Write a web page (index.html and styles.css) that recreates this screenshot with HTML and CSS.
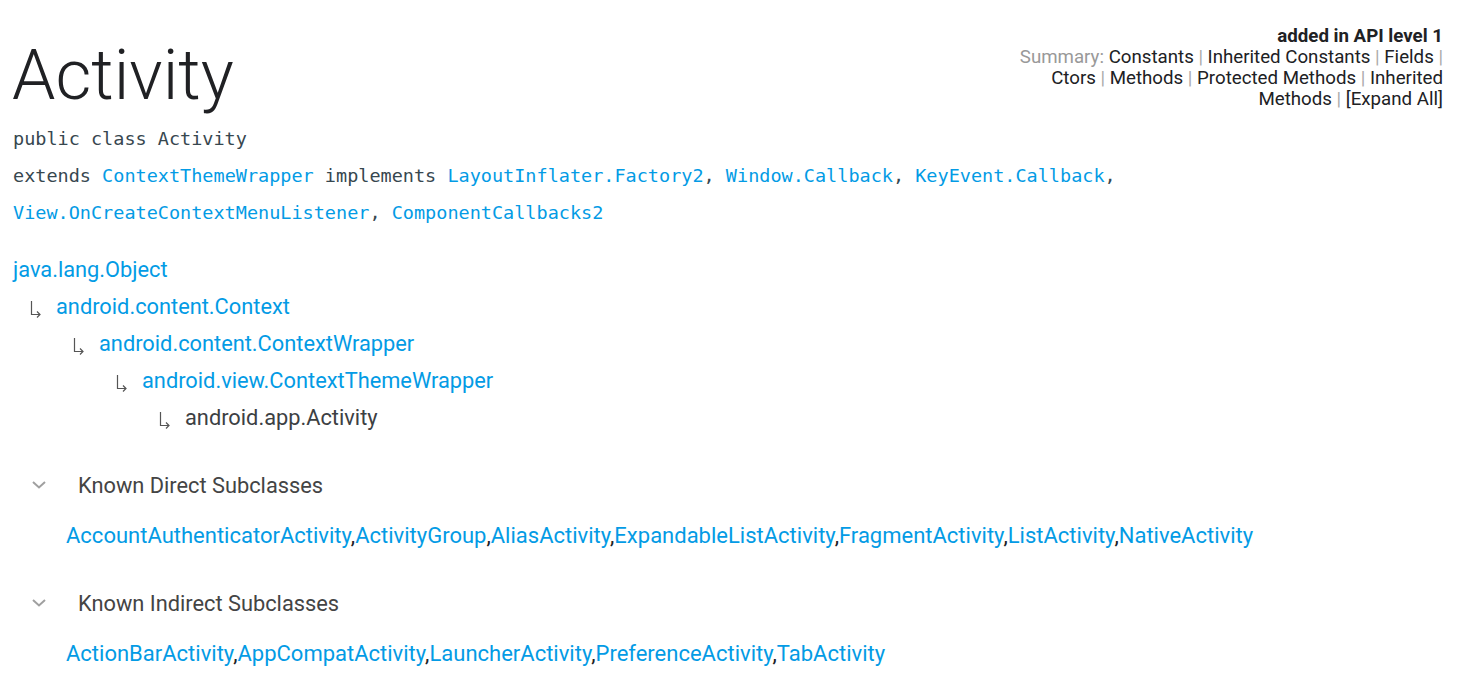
FILE: index.html
```html
<!DOCTYPE html>
<html>
<head>
<meta charset="utf-8">
<link rel="stylesheet" href="styles.css">
</head>
<body>
<div class="page">
  <div class="head">
    <h1 class="title">Activity</h1>
    <div class="meta">
      <div class="api">added in API level 1</div>
      <div class="summary"><span class="muted">Summary:</span> Constants <span class="sep">|</span> Inherited Constants <span class="sep">|</span> Fields <span class="sep">|</span> Ctors <span class="sep">|</span> Methods <span class="sep">|</span> Protected Methods <span class="sep">|</span> Inherited Methods <span class="sep">|</span> [Expand All]</div>
    </div>
  </div>
  <p class="code">public class Activity</p>
  <p class="code">extends <a class="link">ContextThemeWrapper</a> implements <a class="link">LayoutInflater.Factory2</a>, <a class="link">Window.Callback</a>, <a class="link">KeyEvent.Callback</a>, <a class="link">View.OnCreateContextMenuListener</a>, <a class="link">ComponentCallbacks2</a></p>

  <div class="tree">
    <div class="row"><a class="link">java.lang.Object</a></div>
    <div class="row lvl1"><svg class="arr" width="12" height="18" viewBox="0 0 12 18"><path d="M1.5 1 V14.5 H10 M7 11.5 L10 14.5 L7 17.5" fill="none" stroke="#555" stroke-width="1.2"/></svg><a class="link">android.content.Context</a></div>
    <div class="row lvl2"><svg class="arr" width="12" height="18" viewBox="0 0 12 18"><path d="M1.5 1 V14.5 H10 M7 11.5 L10 14.5 L7 17.5" fill="none" stroke="#555" stroke-width="1.2"/></svg><a class="link">android.content.ContextWrapper</a></div>
    <div class="row lvl3"><svg class="arr" width="12" height="18" viewBox="0 0 12 18"><path d="M1.5 1 V14.5 H10 M7 11.5 L10 14.5 L7 17.5" fill="none" stroke="#555" stroke-width="1.2"/></svg><a class="link">android.view.ContextThemeWrapper</a></div>
    <div class="row lvl4"><svg class="arr" width="12" height="18" viewBox="0 0 12 18"><path d="M1.5 1 V14.5 H10 M7 11.5 L10 14.5 L7 17.5" fill="none" stroke="#555" stroke-width="1.2"/></svg><span class="cur">android.app.Activity</span></div>
  </div>

  <div class="section">
    <div class="sec-head"><svg class="chev" width="16" height="10" viewBox="0 0 16 10"><path d="M2 2 L8 7.5 L14 2" fill="none" stroke="#a0a0a0" stroke-width="2"/></svg><span class="sec-title">Known Direct Subclasses</span></div>
    <div class="sub-list"><a class="link">AccountAuthenticatorActivity</a>,<a class="link">ActivityGroup</a>,<a class="link">AliasActivity</a>,<a class="link">ExpandableListActivity</a>,<a class="link">FragmentActivity</a>,<a class="link">ListActivity</a>,<a class="link">NativeActivity</a></div>
  </div>

  <div class="section">
    <div class="sec-head"><svg class="chev" width="16" height="10" viewBox="0 0 16 10"><path d="M2 2 L8 7.5 L14 2" fill="none" stroke="#a0a0a0" stroke-width="2"/></svg><span class="sec-title">Known Indirect Subclasses</span></div>
    <div class="sub-list"><a class="link">ActionBarActivity</a>,<a class="link">AppCompatActivity</a>,<a class="link">LauncherActivity</a>,<a class="link">PreferenceActivity</a>,<a class="link">TabActivity</a></div>
  </div>
</div>
</body>
</html>
```
FILE: styles.css
```css
* { box-sizing: border-box; }
body {
  margin: 0;
  background: #fff;
  font-family: Roboto, "Noto Sans", sans-serif;
  color: #202124;
}
.page {
  padding: 20px 36px 0 13px;
}
.head {
  display: flex;
  justify-content: space-between;
  align-items: flex-start;
}
.title {
  margin: 16px 0 0 -1px;
  font-weight: 300;
  font-size: 69.5px;
  line-height: 80px;
  color: #202124;
}
.meta {
  width: 440px;
  text-align: right;
  font-size: 18.7px;
  line-height: 21px;
  padding-top: 6px;
}
.api {
  font-weight: 700;
}
.muted { color: #999; }
.sep { color: #aaa; }
.code {
  margin: 0;
  font-family: "DejaVu Sans Mono", "Liberation Mono", monospace;
  font-size: 18.5px;
  line-height: 37px;
  color: #37474f;
}
.code:first-of-type { margin-top: 4px; }
.link { color: #039be5; text-decoration: none; }
.tree {
  margin-top: 20px;
  font-size: 21.8px;
  line-height: 37px;
}
.row {
  display: flex;
  align-items: center;
  height: 37px;
}
.arr { margin-right: 14px; flex: none; position: relative; top: 2px; }
.lvl1 { padding-left: 17px; }
.lvl2 { padding-left: 60px; }
.lvl3 { padding-left: 103px; }
.lvl4 { padding-left: 146px; }
.cur { color: #3c4043; }
.section {
  margin-top: 34px;
}
.section + .section { margin-top: 37px; }
.sec-head {
  display: flex;
  align-items: center;
  height: 30px;
  padding-left: 18px;
}
.chev { flex: none; margin-right: 31px; }
.sec-title {
  font-size: 21.8px;
  color: #444;
}
.sub-list {
  margin-top: 21px;
  padding-left: 53px;
  font-size: 22px;
  line-height: 30px;
}
```
